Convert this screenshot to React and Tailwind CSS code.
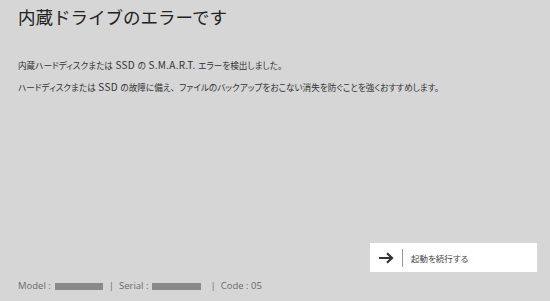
export default function App() {
  const A = ({ children }) => (
    <span className="text-[10px] tracking-[0.3px]">{children}</span>
  );
  return (
    <div
      className="w-[550px] h-[301px] bg-[#d6d6d6] flex flex-col pl-[18px] pr-[13px] overflow-hidden"
      style={{ fontFamily: '"Noto Sans CJK JP", "Noto Sans", sans-serif' }}
    >
      <h1 className="mt-[6px] text-[17.5px] leading-[22px] text-[#222] font-normal">
        内蔵ドライブのエラーです
      </h1>
      <p className="mt-[31px] text-[8.6px] leading-[12px] text-[#333] whitespace-nowrap [font-feature-settings:'palt']">
        内蔵ハードディスクまたは<A> SSD </A>の<A> S.M.A.R.T. </A>エラーを検出しました。
      </p>
      <p className="mt-[10px] text-[8.6px] leading-[12px] text-[#333] whitespace-nowrap [font-feature-settings:'palt']">
        ハードディスクまたは<A> SSD </A>の故障に備え<span className="[font-feature-settings:normal]">、</span>ファイルのバックアップをおこない消失を防ぐことを強くおすすめします。
      </p>
      <div className="mt-auto self-end w-[167px] h-[29px] bg-white flex items-center">
        <svg width="16" height="12" viewBox="0 0 16 12" className="ml-[8px]">
          <path d="M1 6 H14 M9 1.2 L14 6 L9 10.8" fill="none" stroke="#333" strokeWidth="2.2" strokeLinejoin="miter" />
        </svg>
        <div className="ml-[8px] w-px h-[18px] bg-[#999]" />
        <span className="ml-[8px] text-[8.5px] leading-[12px] text-[#444] [font-feature-settings:'palt']">起動を続行する</span>
      </div>
      <div
        className="mt-[8px] mb-[9px] h-[12px] flex items-center text-[9.5px] leading-[12px] text-[#6a6a6a]"
        style={{ fontFamily: '"Open Sans", "Noto Sans", sans-serif' }}
      >
        <span>Model :</span>
        <span className="ml-[4px] w-[48px] h-[7px] bg-[#8a8a8a]" />
        <span className="ml-[6px]">|</span>
        <span className="ml-[5px]">Serial :</span>
        <span className="ml-[4px] w-[49px] h-[7px] bg-[#8a8a8a]" />
        <span className="ml-[9px]">|</span>
        <span className="ml-[5px]">Code : 05</span>
      </div>
    </div>
  );
}
